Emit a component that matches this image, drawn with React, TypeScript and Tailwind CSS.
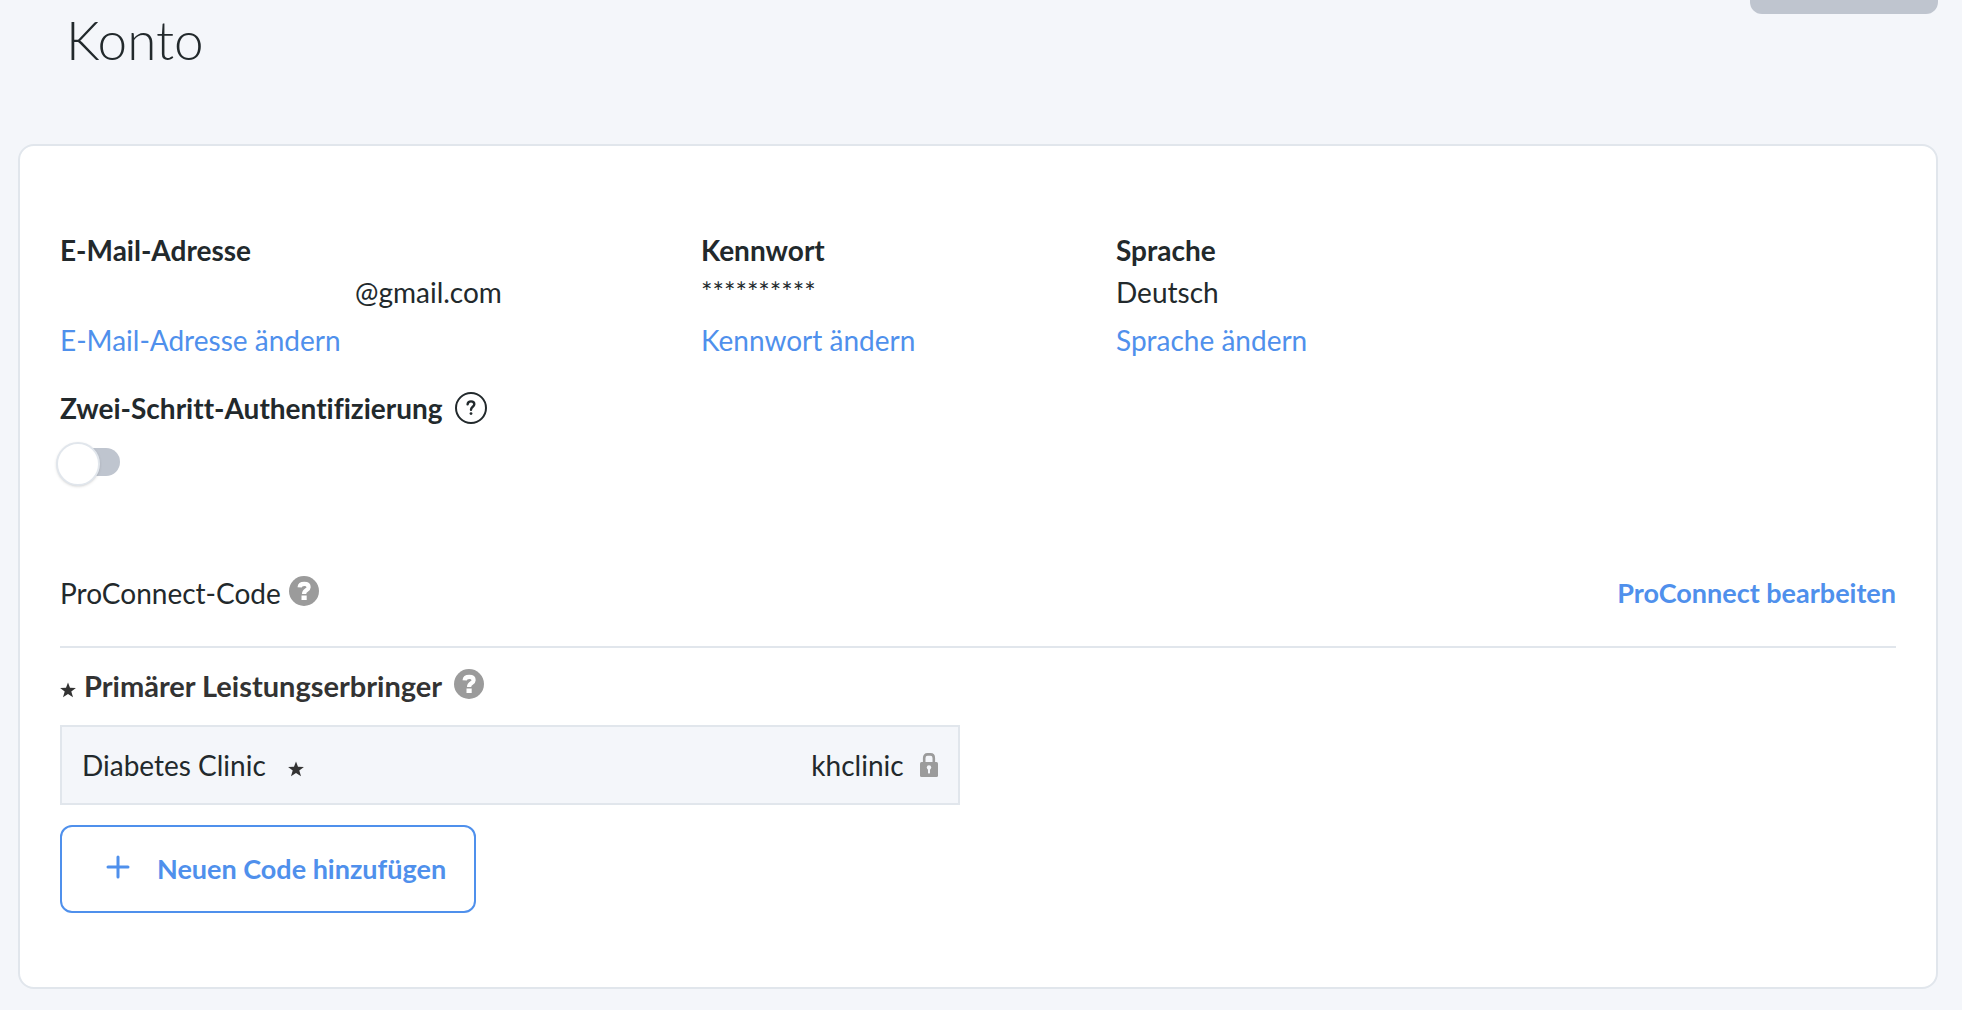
import React, { useState } from "react";

function Star() {
  return (
    <svg className="size-4 shrink-0" viewBox="0 0 16 16" fill="#333333" aria-hidden="true">
      <path d="M8 0.4 L10 5.8 L15.9 5.9 L11.3 9.5 L13 15.3 L8 11.9 L3 15.3 L4.7 9.5 L0.1 5.9 L6 5.8 Z" />
    </svg>
  );
}

function HelpFilled({ label }: { label: string }) {
  return (
    <button type="button" aria-label={label} className="mb-1 shrink-0">
      <svg className="block size-[30px]" viewBox="0 0 30 30" aria-hidden="true">
        <circle cx="15" cy="15" r="15" fill="#9b9b9b" />
        <path
          d="M10.6 11.4 C10.8 8.9 12.6 7.9 15.2 7.9 C18 7.9 19.6 9.2 19.6 11.2 C19.6 14.2 15.1 13.8 15.1 17.9"
          fill="none"
          stroke="#fff"
          strokeWidth="4.2"
        />
        <rect x="12.5" y="19.5" width="5.2" height="4.5" fill="#fff" />
      </svg>
    </button>
  );
}

function HelpOutline({ label }: { label: string }) {
  return (
    <button type="button" aria-label={label} className="shrink-0">
      <svg className="block size-8" viewBox="0 0 32 32" fill="none" stroke="#22292c" aria-hidden="true">
        <circle cx="16" cy="16" r="15" strokeWidth="2" />
        <path
          d="M12.6 12.4 C12.8 10.4 14.2 9.4 16 9.4 C18 9.4 19.3 10.5 19.3 12.2 C19.3 14.8 16 14.8 16 17.8"
          strokeWidth="2.4"
          strokeLinecap="round"
        />
        <circle cx="16" cy="21.6" r="1.4" fill="#22292c" stroke="none" />
      </svg>
    </button>
  );
}

function Lock() {
  return (
    <svg className="h-6 w-[18px] shrink-0" viewBox="0 0 18 24" aria-hidden="true">
      <path d="M4.2 10 V5 Q4.2 1.4 7.5 1.4 H10.5 Q13.8 1.4 13.8 5 V10" fill="none" stroke="#9b9b9b" strokeWidth="2.6" />
      <rect x="0" y="9" width="18" height="15" rx="1.5" fill="#9b9b9b" />
      <circle cx="9" cy="14.4" r="2.2" fill="#f4f6fa" />
      <rect x="8" y="15" width="2" height="5.4" fill="#f4f6fa" />
    </svg>
  );
}

const details = [
  { title: "E-Mail-Adresse", value: "@gmail.com", action: "E-Mail-Adresse ändern", valueClass: "pl-[295px]" },
  { title: "Kennwort", value: "**********", action: "Kennwort ändern", valueClass: "text-[27px]" },
  { title: "Sprache", value: "Deutsch", action: "Sprache ändern", valueClass: "" },
];

export default function App() {
  const [twoStep, setTwoStep] = useState(false);

  return (
    <div className="min-h-screen bg-[#f4f6fa] pb-5 pl-[18px] pr-6 font-['Lato',sans-serif] text-[28px] leading-[42px] text-[#22292c]">
      <header className="flex items-start justify-between pb-[73px]">
        <h1 className="pl-12 pt-[9px] text-[53px] font-light leading-[62px]">Konto</h1>
        <button type="button" aria-label="Speichern" disabled className="h-3.5 w-[188px] rounded-b-xl bg-[#bfc5cf]" />
      </header>

      <main className="rounded-2xl border-2 border-[#e1e6ec] bg-white px-10 pb-[74px] pt-[83px]">
        <section className="grid grid-cols-[641fr_415fr_780fr]">
          {details.map((d) => (
            <div key={d.title}>
              <h2 className="font-bold">{d.title}</h2>
              <p className={d.valueClass}>{d.value}</p>
              <a href="#" className="mt-1.5 block w-fit text-[#4f90ec]">
                {d.action}
              </a>
            </div>
          ))}
        </section>

        <section className="mt-[26px]">
          <div className="flex items-center gap-3">
            <label htmlFor="two-step" className="font-bold [font-variant-ligatures:no-common-ligatures]">
              Zwei-Schritt-Authentifizierung
            </label>
            <HelpOutline label="Hilfe zur Zwei-Schritt-Authentifizierung" />
          </div>
          <div className="relative mt-[19px] h-7 w-[60px]">
            <input
              id="two-step"
              type="checkbox"
              role="switch"
              checked={twoStep}
              onChange={(e) => setTwoStep(e.target.checked)}
              className="peer block h-7 w-[60px] cursor-pointer appearance-none rounded-full bg-[#bfc5cf] checked:bg-[#4f90ec]"
            />
            <span className="pointer-events-none absolute -left-1 -top-1.5 size-11 rounded-full border-2 border-[#e1e6ec] bg-white shadow-sm peer-checked:left-5" />
          </div>
        </section>

        <section className="mt-24">
          <div className="flex items-center justify-between border-b-2 border-[#e1e6ec] pb-8">
            <div className="flex items-center gap-2">
              <h2>ProConnect-Code</h2>
              <HelpFilled label="Hilfe zum ProConnect-Code" />
            </div>
            <a href="#" className="text-[27px] font-bold text-[#4f90ec]">
              ProConnect bearbeiten
            </a>
          </div>

          <div className="mt-[17px] flex items-center">
            <span className="pt-2">
              <Star />
            </span>
            <h3 className="ml-2 mr-3 text-[29px] font-bold text-[#333333]">Primärer Leistungserbringer</h3>
            <HelpFilled label="Hilfe zum primären Leistungserbringer" />
          </div>

          <div className="mt-[18px] flex w-[49%] items-center justify-between border-2 border-[#e1e6ec] bg-[#f4f6fa] px-5 py-[17px]">
            <div className="flex items-center gap-[22px]">
              <span>Diabetes Clinic</span>
              <span className="pt-2">
                <Star />
              </span>
            </div>
            <div className="flex items-center gap-4">
              <span>khclinic</span>
              <Lock />
            </div>
          </div>

          <button
            type="button"
            className="mt-5 flex h-[88px] items-center rounded-xl border-2 border-[#4f90ec] pl-11 pr-7 text-[27px] font-bold text-[#4f90ec]"
          >
            <svg className="mb-1 mr-[27px] size-6" viewBox="0 0 24 24" stroke="#4f90ec" strokeWidth="3" strokeLinecap="round" aria-hidden="true">
              <path d="M12 2V22M2 12H22" />
            </svg>
            Neuen Code hinzufügen
          </button>
        </section>
      </main>
    </div>
  );
}
